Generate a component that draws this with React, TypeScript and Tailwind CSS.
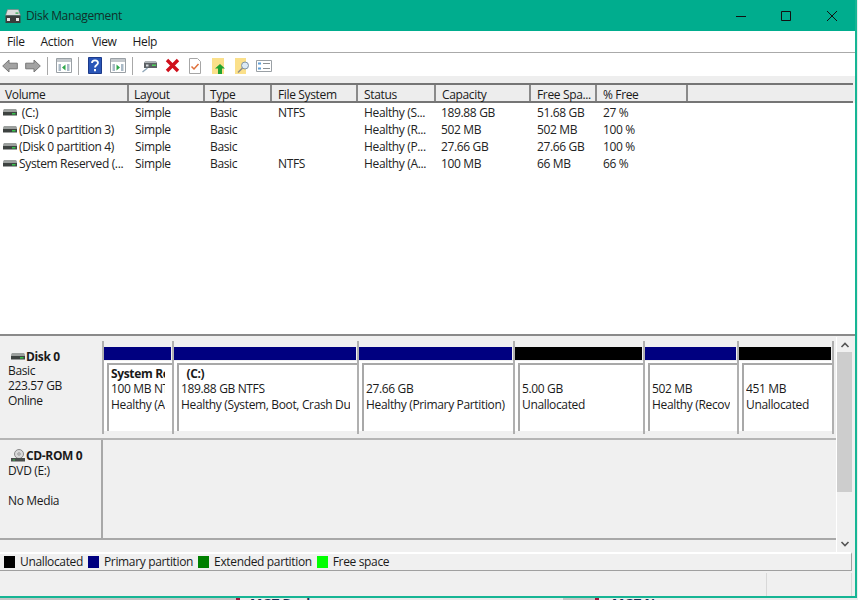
import React from "react";

const cols = [
  { n: "Volume", w: "w-[129px]", p: "pl-[5px]", r: "gap-[2px] pl-[3px]" },
  { n: "Layout", w: "w-[76px]", p: "pl-[5px]", r: "pl-[6px]" },
  { n: "Type", w: "w-[67px]", p: "pl-[5px]", r: "pl-[5px]" },
  { n: "File System", w: "w-[86px]", p: "pl-[6px]", r: "pl-[6px]" },
  { n: "Status", w: "w-[78px]", p: "pl-[6px]", r: "pl-[6px]" },
  { n: "Capacity", w: "w-[95px]", p: "pl-[6px]", r: "pl-[5px]" },
  { n: "Free Spa...", w: "w-[66px]", p: "pl-[6px]", r: "pl-[6px]" },
  { n: "% Free", w: "w-[91px]", p: "pl-[6px]", r: "pl-[6px]" },
];

const rows = [
  [" (C:)", "Simple", "Basic", "NTFS", "Healthy (S...", "189.88 GB", "51.68 GB", "27 %"],
  ["(Disk 0 partition 3)", "Simple", "Basic", "", "Healthy (R...", "502 MB", "502 MB", "100 %"],
  ["(Disk 0 partition 4)", "Simple", "Basic", "", "Healthy (P...", "27.66 GB", "27.66 GB", "100 %"],
  ["System Reserved (...", "Simple", "Basic", "NTFS", "Healthy (A...", "100 MB", "66 MB", "66 %"],
];

const parts = [
  { w: "w-[70px]", color: "bg-[#000080]", lines: ["System Reserved", "100 MB NTFS", "Healthy (A"], bold: true },
  { w: "w-[185px]", color: "bg-[#000080]", lines: ["  (C:)", "189.88 GB NTFS", "Healthy (System, Boot, Crash Dump, Primary Partition)"], bold: true },
  { w: "w-[156px]", color: "bg-[#000080]", lines: ["", "27.66 GB", "Healthy (Primary Partition)"] },
  { w: "w-[130px]", color: "bg-black", lines: ["", "5.00 GB", "Unallocated"] },
  { w: "w-[94px]", color: "bg-[#000080]", lines: ["", "502 MB", "Healthy (Recovery Partition)"] },
  { w: "w-[97px]", color: "bg-black", lines: ["", "451 MB", "Unallocated"], last: true },
];

function DriveIcon() {
  return (
    <svg width="14" height="7" viewBox="0 0 14 7" className="shrink-0">
      <path d="M0 1.500L1 0h12l1 1.500V3H0z" fill="#9b9f9d" />
      <path d="M0 3h14v3.500H0z" fill="#3d4240" />
      <path d="M9 4h3.500v1.500H9z" fill="#35c24a" />
    </svg>
  );
}

function Sep({ className }: { className: string }) {
  return <div className={`h-[18px] w-px shrink-0 bg-[#a8a8a8] ${className}`} />;
}

function PaneIcon({ right, className }: { right?: boolean; className: string }) {
  return (
    <svg width="16" height="15" viewBox="0 0 16 15" className={className}>
      <path d="M.5.500h15v14H.5z" fill="#fff" stroke="#9aa0a5" />
      <path d="M1 1h14v3H1z" fill="#c3c8cc" />
      <path d="M2.500 6h2.500v7H2.500zM11 6h2.500v7H11z" fill="#a9b9c6" />
      <path d={right ? "M6.500 6.500v6l3.500-3z" : "M9.500 6.500v6l-3.500-3z"} fill="#2fa84a" />
    </svg>
  );
}

function Toolbar() {
  return (
    <div className="flex h-[23px] shrink-0 items-center bg-white pl-[2px] pt-[2px]">
      <svg width="16" height="14" viewBox="0 0 16 14" className="shrink-0">
        <path d="M.7 7L7 1v3.200h8.300v5.600H7V13z" fill="#a3a3a3" stroke="#777" />
      </svg>
      <svg width="16" height="14" viewBox="0 0 16 14" className="ml-[7px] shrink-0">
        <path d="M15.300 7L9 1v3.200H.7v5.600H9V13z" fill="#a3a3a3" stroke="#777" />
      </svg>
      <Sep className="ml-[6px]" />
      <PaneIcon className="ml-[8px] shrink-0" />
      <Sep className="ml-[6px]" />
      <svg width="14" height="17" viewBox="0 0 14 17" className="ml-[9px] shrink-0">
        <path d="M.5.500h13v16H.5z" fill="#2a56b8" stroke="#1c3a8a" />
        <path d="M4 6c0-3.500 6-3.500 6 0 0 2-3 2-3 4.500" fill="none" stroke="#fff" strokeWidth="1.800" />
        <path d="M6 12h2v2.200H6z" fill="#fff" />
      </svg>
      <PaneIcon right className="ml-[8px] shrink-0" />
      <Sep className="ml-[6px]" />
      <svg width="15" height="14" viewBox="0 0 15 14" className="ml-[9px] shrink-0">
        <path d="M2 4l1-1.500h11L15 4v5H2z" fill="#5b6064" />
        <path d="M2 4l1-1.500h11L15 4z" fill="#aeb3b7" />
        <path d="M10 5.500h4V7h-4z" fill="#4fd05a" />
        <path d="M4 5.500h2.500v2H4z" fill="#d8dde0" />
        <path d="M0.500 13l5-4" stroke="#8fa6b8" strokeWidth="1.500" />
      </svg>
      <svg width="15" height="15" viewBox="0 0 15 15" className="ml-[8px] shrink-0">
        <path d="M2 2l11 11M13 2L2 13" stroke="#d0101c" strokeWidth="3.400" />
      </svg>
      <svg width="12" height="16" viewBox="0 0 12 16" className="ml-[9px] shrink-0">
        <path d="M.5.500h8l3 3v12H.500z" fill="#fff" stroke="#a6a6a6" />
        <path d="M2.500 8.500l2.500 2.500L9.500 6" fill="none" stroke="#e0703a" strokeWidth="1.500" />
      </svg>
      <svg width="14" height="16" viewBox="0 0 14 16" className="ml-[11px] shrink-0">
        <path d="M0 0h12v16H0z" fill="#fbe08a" />
        <path d="M8 6l5 4.500h-3V16H6v-5.500H3z" fill="#22a32f" />
      </svg>
      <svg width="15" height="16" viewBox="0 0 15 16" className="ml-[9px] shrink-0">
        <path d="M0 0h11v16H0z" fill="#fbe08a" />
        <circle cx="10" cy="7.500" r="3.500" fill="#dbe9f5" stroke="#7f93a5" />
        <path d="M7.500 10L3 14.500" stroke="#8a8a8a" strokeWidth="1.500" />
      </svg>
      <svg width="16" height="12" viewBox="0 0 16 12" className="ml-[6px] shrink-0">
        <path d="M.5.500h15v11H.5z" fill="#fff" stroke="#9aa0a5" />
        <path d="M2 2.500h3v2H2zM2 7.500h3v2H2z" fill="#5f9fd8" />
        <path d="M7 3.500h7M7 8.500h7" stroke="#8b8f92" />
      </svg>
    </div>
  );
}

export default function App() {
  return (
    <div className="h-[600px] w-[858px] overflow-hidden bg-[#ececec] font-['Open_Sans','Noto_Sans',sans-serif] text-[12px] leading-[16px] tracking-[-0.35px] text-[#1a1a1a]">
      <div className="flex h-[598px] w-[857px] flex-col border-b-2 border-r-2 border-[#16b594] bg-[#f0f0f0]">
        {/* title */}
        <div className="flex h-[31px] shrink-0 items-center bg-[#00ad8e] pl-[5px]">
          <svg width="16" height="14" viewBox="0 0 16 14" className="mr-[5px] shrink-0">
            <path d="M2.500.5h11l2 6H.5z" fill="#dcdcdc" stroke="#777" strokeWidth=".6" />
            <path d="M.5 6.500h15V14H.5z" fill="#3a3e3c" />
            <path d="M2 9h3v3H2zM11 9h3v3h-3z" fill="#e8e8e8" />
            <path d="M10.500 3.500h3v1.200h-3z" fill="#28a745" />
          </svg>
          <span className="text-[#10302a]">Disk Management</span>
          <div className="ml-auto flex items-center">
            <svg width="12" height="12" viewBox="0 0 12 12" className="mr-[33px]">
              <path d="M1 6.500h10" stroke="#111" />
            </svg>
            <svg width="12" height="12" viewBox="0 0 12 12" className="mr-[34px]">
              <path d="M1.500 1.500h9v9h-9z" fill="none" stroke="#111" />
            </svg>
            <svg width="12" height="12" viewBox="0 0 12 12" className="mr-[17px]">
              <path d="M1 1l10 10M11 1L1 11" stroke="#111" />
            </svg>
          </div>
        </div>
        {/* menu */}
        <div className="flex h-[22px] shrink-0 items-center gap-[16px] border-b border-[#aaaaaa] bg-white pl-[7px]">
          <span>File</span>
          <span className="mr-[2px]">Action</span>
          <span>View</span>
          <span>Help</span>
        </div>
        <Toolbar />
        <div className="h-[7px] shrink-0 bg-[#eeeeee]" />
        {/* header */}
        <div className="mr-[2px] flex h-[20px] shrink-0 border-y-2 border-[#757575] bg-[#ededed]">
          {cols.map((c) => (
            <div key={c.n} className={`${c.w} ${c.p} shrink-0 border-r-2 border-[#8a8a8a] pt-[2px] leading-[16px]`}>
              {c.n}
            </div>
          ))}
        </div>
        {/* list */}
        <div className="h-[231px] shrink-0 bg-white pt-[1px] text-[#222]">
          {rows.map((r) => (
            <div key={r[0]} className="flex h-[17px] items-center">
              {r.map((t, i) => (
                <div key={i} className={`${cols[i].w} ${cols[i].r} flex shrink-0 items-center overflow-hidden whitespace-pre`}>
                  {i === 0 && <DriveIcon />}
                  {t}
                </div>
              ))}
            </div>
          ))}
        </div>
        <div className="h-[3px] shrink-0 border-t-2 border-[#8a8a8a]" />
        {/* graphical */}
        <div className="flex h-[215px] shrink-0">
          <div className="w-[836px] shrink-0 pt-[4px]">
            <div className="flex h-[99px] border-b-2 border-[#b5b5b5]">
              <div className="w-[102px] shrink-0 pl-[8px] pt-[8px] leading-[15px]">
                <div className="flex items-center gap-[1px] font-bold">
                  <span className="ml-[3px]"><DriveIcon /></span>
                  <span>Disk 0</span>
                </div>
                <div className="-mt-[1px]">Basic</div>
                <div>223.57 GB</div>
                <div>Online</div>
              </div>
              <div className="flex h-[93px]">
                {parts.map((p, i) => (
                  <div key={i} className={`${p.w} flex shrink-0 flex-col border-l-2 border-[#b0b0b0] ${p.last ? "border-r-2" : ""}`}>
                    <div className={`mr-[1px] mt-[6px] h-[13px] shrink-0 ${p.color}`} />
                    <div className="mt-[1px] h-[70px] shrink-0 bg-white pl-[3px] pt-[2px]">
                      <div className="h-full border-l-2 border-t-2 border-[#a8a8a8] pl-[2px] pt-[1px] leading-[15.500px]">
                        <div className="mr-[7px] overflow-hidden whitespace-pre">
                          <div className={`h-[15px] ${p.bold ? "font-bold" : ""}`}>{p.lines[0]}</div>
                          <div>{p.lines[1]}</div>
                          <div>{p.lines[2]}</div>
                        </div>
                      </div>
                    </div>
                  </div>
                ))}
              </div>
            </div>
            <div className="flex h-[100px] border-b-2 border-[#a8a8a8]">
              <div className="w-[103px] shrink-0 border-r-2 border-[#a8a8a8] pl-[8px] pt-[8px] leading-[15px]">
                <div className="flex items-center font-bold">
                  <svg width="15" height="13" viewBox="0 0 15 13" className="ml-[3px] shrink-0">
                    <circle cx="8" cy="5" r="4.500" fill="#d8d8d8" stroke="#8a8a8a" />
                    <circle cx="8" cy="5" r="1.200" fill="#fff" stroke="#8a8a8a" />
                    <path d="M0 9h14v3.500H0z" fill="#4a4e4c" />
                    <path d="M2 10.500h2v1H2z" fill="#35c24a" />
                  </svg>
                  <span>CD-ROM 0</span>
                </div>
                <div>DVD (E:)</div>
                <div className="h-[15px]" />
                <div>No Media</div>
              </div>
            </div>
          </div>
          {/* scrollbar */}
          <div className="flex w-[17px] shrink-0 flex-col items-center border-l border-white pr-[1px]">
            <svg width="10" height="15" viewBox="0 0 10 15" className="shrink-0">
              <path d="M1.500 10L5 6.500 8.500 10" fill="none" stroke="#555" strokeWidth="1.600" />
            </svg>
            <div className="h-[140px] w-[15px] bg-[#cdcdcd]" />
            <div className="flex-1" />
            <svg width="10" height="15" viewBox="0 0 10 15" className="shrink-0">
              <path d="M1.500 5L5 8.500 8.500 5" fill="none" stroke="#555" strokeWidth="1.600" />
            </svg>
          </div>
        </div>
        {/* legend */}
        <div className="mr-[3px] flex h-[19px] shrink-0 items-center gap-[5px] border-b border-r border-t-2 border-b-[#a0a0a0] border-r-[#a0a0a0] border-t-white pb-[1px] pl-[4px]">
          <i className="h-[12px] w-[11px] bg-black" />
          <span>Unallocated</span>
          <i className="h-[12px] w-[11px] bg-[#000080]" />
          <span>Primary partition</span>
          <i className="h-[12px] w-[11px] bg-[#008000]" />
          <span>Extended partition</span>
          <i className="h-[12px] w-[11px] bg-[#00ff00]" />
          <span>Free space</span>
        </div>
        <div className="flex flex-1 pr-[3px] pt-[2px]">
          <div className="ml-auto h-full w-[86px] border-x border-[#d8d8d8]" />
        </div>
      </div>
      {/* what shows of the page behind the window */}
      <div className="flex h-[2px] overflow-hidden text-[13px] font-bold leading-[13px] tracking-normal text-[#1b2a52]">
        <div className="h-full w-[236px] shrink-0 bg-[#c6c6c6]" />
        <div className="h-full w-[4px] shrink-0 bg-[#a3123a]" />
        <div className="-mt-[1px] w-[323px] shrink-0 pl-[10px]">MGT Desk</div>
        <div className="h-full w-[32px] shrink-0 bg-[#c6c6c6]" />
        <div className="h-full w-[4px] shrink-0 bg-[#a3123a]" />
        <div className="-mt-[1px] pl-[13px]">MGT N</div>
      </div>
    </div>
  );
}
